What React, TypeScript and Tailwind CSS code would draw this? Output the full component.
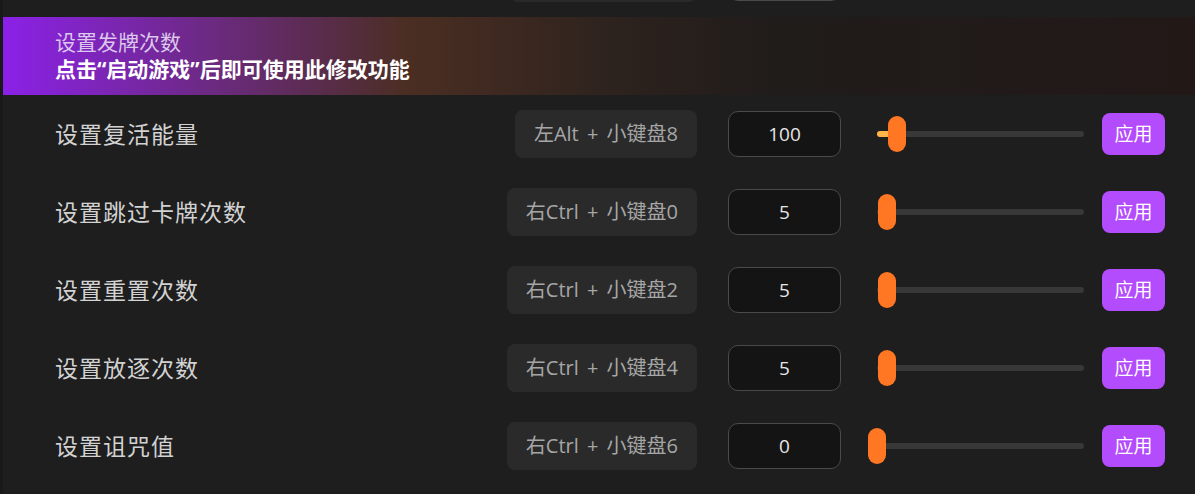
import React from "react";

type Row = { label: string; key: string; value: string; thumb: number; fill?: number };

const rows: Row[] = [
  { label: "设置复活能量", key: "左Alt + 小键盘8", value: "100", thumb: 20, fill: 13 },
  { label: "设置跳过卡牌次数", key: "右Ctrl + 小键盘0", value: "5", thumb: 10 },
  { label: "设置重置次数", key: "右Ctrl + 小键盘2", value: "5", thumb: 10 },
  { label: "设置放逐次数", key: "右Ctrl + 小键盘4", value: "5", thumb: 10 },
  { label: "设置诅咒值", key: "右Ctrl + 小键盘6", value: "0", thumb: 0 },
];

const font = { fontFamily: '"Open Sans","Noto Sans CJK SC",sans-serif' };

function SettingRow({ r }: { r: Row }) {
  return (
    <div className="flex h-[78px] items-center pl-[52px] pr-[30px]">
      <div className="flex-1 text-[23px] tracking-[1px] text-[#d2d2d2]">{r.label}</div>
      <div className="flex h-[48px] items-center rounded-[8px] bg-[#2a2a2a] px-[19px] text-[20px] text-[#a6a6a6] [word-spacing:3px]">
        {r.key}
      </div>
      <div className="ml-[31px] flex h-[46px] w-[113px] items-center justify-center rounded-[10px] border-[1.5px] border-[#4a4a4a] bg-[#141414] text-[19px] text-[#e6e6e6]">
        {r.value}
      </div>
      <div className="relative ml-[36px] h-[6px] w-[207px] rounded-full bg-[#383838]">
        {r.fill ? (
          <div className="absolute left-0 top-0 h-[6px] rounded-full bg-[#ffb54a]" style={{ width: r.fill }} />
        ) : null}
        <div
          className="absolute top-[-15px] h-[36px] w-[18px] rounded-full bg-[#ff7722]"
          style={{ left: r.thumb - 9 }}
        />
      </div>
      <div className="ml-[18px] flex h-[42px] w-[63px] items-center justify-center rounded-[8px] bg-[#b24cfc] text-[19px] text-white">
        应用
      </div>
    </div>
  );
}

function HiddenRow() {
  return (
    <div className="mt-[-61px] flex h-[78px] items-center pl-[52px] pr-[30px]">
      <div className="flex-1" />
      <div className="h-[48px] w-[187px] rounded-[8px] bg-[#2a2a2a]" />
      <div className="ml-[31px] h-[46px] w-[113px] rounded-[10px] border-[1.5px] border-[#4a4a4a] bg-[#141414]" />
      <div className="ml-[36px] w-[207px]" />
      <div className="ml-[18px] w-[63px]" />
    </div>
  );
}

export default function App() {
  return (
    <div className="flex h-[494px] w-[1195px] overflow-hidden bg-[#1e1e1e]" style={font}>
      <div className="w-[3px] shrink-0 bg-[#191919]" />
      <div className="flex flex-1 flex-col">
        <HiddenRow />
        <div className="flex h-[78px] flex-col justify-center bg-[linear-gradient(90deg,#8b21e8_0%,#6b2a7e_18%,#4b2e22_34%,#2c221e_52%,#201c1a_65%,#221917_100%)] pl-[52px]">
          <div className="text-[21px] leading-[27px] text-[#dcc6ec]">设置发牌次数</div>
          <div className="text-[21px] font-bold leading-[27px] text-white">点击“启动游戏”后即可使用此修改功能</div>
        </div>
        {rows.map((r) => (
          <SettingRow key={r.label} r={r} />
        ))}
      </div>
    </div>
  );
}
